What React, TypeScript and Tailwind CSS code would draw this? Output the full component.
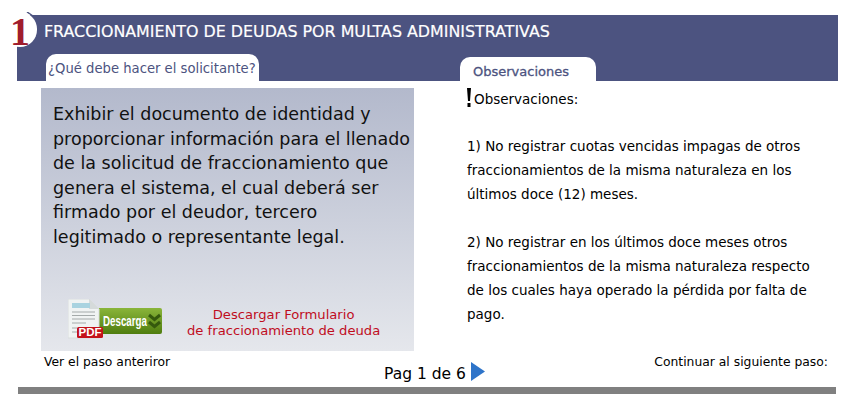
const SANS = { fontFamily: '"DejaVu Sans", sans-serif' };
const ARIAL = { fontFamily: '"Liberation Sans", sans-serif' };

function DownloadBadge() {
  return (
    <div className="relative h-[40px] w-[94px] shrink-0">
      <svg width="94" height="40" viewBox="0 0 94 40" className="absolute inset-0">
        <defs>
          <linearGradient id="green" x1="0" y1="0" x2="0" y2="1">
            <stop offset="0" stopColor="#8ab53a" />
            <stop offset="1" stopColor="#4f7d0f" />
          </linearGradient>
        </defs>
        <path d="M31 9h61a2 2 0 0 1 2 2v22a2 2 0 0 1-2 2H31z" fill="url(#green)" />
        <path d="M81 16l5.500 4.500 5.500-4.500M81 23l5.500 4.500 5.500-4.500" fill="none" stroke="#35590d" strokeWidth="3" />
        <path d="M0 0h21l10 10v29H0z" fill="#f0f3f3" stroke="#d9dddd" />
        <path d="M21 0v10h10z" fill="#d5dada" />
        <rect x="4" y="4" width="18" height="5" fill="#a9d3e0" />
        <path d="M4 13h23M4 16.500h23M4 20h23M4 24h14M4 29h5M4 33h5" stroke="#a4aaaa" strokeWidth="1" />
        <rect x="9" y="28" width="26" height="11" rx="1.500" fill="#c4121a" />
      </svg>
      <span className="absolute left-[9px] top-[28px] w-[26px] text-center text-[11.500px] leading-[11px] font-bold text-white" style={ARIAL}>PDF</span>
      <span className="absolute left-[35px] top-[13px] text-[15px] leading-[18px] font-bold text-white scale-x-[0.65] origin-left" style={ARIAL}>Descarga</span>
    </div>
  );
}

export default function App() {
  return (
    <div className="w-[848px] h-[402px] bg-white overflow-hidden flex flex-col pt-[15px] pl-[17px] pr-[10px] text-black" style={SANS}>
      {/* Header */}
      <div className="relative h-[66px] bg-[#4c5380] flex flex-col shrink-0">
        <svg width="10" height="6" viewBox="0 0 10 6" className="absolute left-[9px] top-[-3px]">
          <path d="M1 0l6 4" stroke="#4c5380" strokeWidth="1.500" fill="none" />
        </svg>
        <div className="absolute left-[-14px] top-[-3px] w-[34px] h-[35px] rounded-full bg-white" />
        <span className="absolute left-[-7px] top-[-3px] text-[40px] leading-[40px] font-bold text-[#a01c2c]" style={{ fontFamily: '"Liberation Serif", serif' }}>1</span>
        <div className="h-[33px] pl-[27px] flex items-center text-[15.860px] text-white [-webkit-text-stroke:0.2px_#ffffff]">FRACCIONAMIENTO DE DEUDAS POR MULTAS ADMINISTRATIVAS</div>
        <div className="mt-auto flex items-end pl-[29px]">
          <div className="w-[213px] h-[27px] bg-white rounded-t-[10px] pl-[2px] pt-[5px] text-[13.200px] leading-[20px] text-[#4c5380]">¿Qué debe hacer el solicitante?</div>
          <div className="ml-[201px] w-[136px] h-[24px] bg-white rounded-t-[10px] pl-[13px] pt-[5px] text-[13px] leading-[20px] [-webkit-text-stroke:0.3px_#4c5380] text-[#4c5380]">Observaciones</div>
        </div>
      </div>

      {/* Content */}
      <div className="flex pt-[7px] h-[270px] shrink-0">
        <div className="ml-[24px] w-[373px] h-[263px] flex flex-col bg-gradient-to-b from-[#b3b9cc] to-[#e5e7ec] pl-[12px] pt-[14px]">
          <p className="text-[17.500px] leading-[24.500px] text-[#111111]">
            Exhibir el documento de identidad y<br />
            proporcionar información para el llenado<br />
            de la solicitud de fraccionamiento que<br />
            genera el sistema, el cual deberá ser<br />
            firmado por el deudor, tercero<br />
            legitimado o representante legal.
          </p>
          <div className="mt-auto mb-[12px] ml-[15px] flex items-center">
            <DownloadBadge />
            <div className="ml-[25px] mt-[8px] text-[13.150px] leading-[16px] text-[#c00d1e] text-center">
              Descargar Formulario<br />de fraccionamiento de deuda
            </div>
          </div>
        </div>
        <div className="ml-[53px] w-[360px] text-[13.500px] leading-[24px]">
          <div className="flex items-start h-[22px]">
            <svg width="4" height="19" viewBox="0 0 4 19" className="mr-[3px] shrink-0">
              <path d="M0 0h4L3 13H1zM.5 15h3v4h-3z" fill="#000000" />
            </svg>
            <span className="leading-[22px]">Observaciones:</span>
          </div>
          <p className="mt-[24px]">1) No registrar cuotas vencidas impagas de otros<br />fraccionamientos de la misma naturaleza en los<br />últimos doce (12) meses.</p>
          <p className="mt-[24px]">2) No registrar en los últimos doce meses otros<br />fraccionamientos de la misma naturaleza respecto<br />de los cuales haya operado la pérdida por falta de<br />pago.</p>
        </div>
      </div>

      {/* Footer nav */}
      <div className="relative h-[36px] shrink-0 flex justify-between text-[12.350px] pl-[27px] pr-[10px]">
        <span className="leading-[22px]">Ver el paso anteriror</span>
        <span className="leading-[22px]">Continuar al siguiente paso:</span>
        <div className="absolute left-[367px] top-[12px] flex items-start gap-[5px] text-[15.500px] leading-[22px]">
          <span>Pag 1 de 6</span>
          <svg width="14" height="19" viewBox="0 0 14 19" className="mt-[-1px]"><path d="M0 0l14 9.500L0 19z" fill="#2e74c9" /></svg>
        </div>
      </div>
      <div className="h-[7px] ml-[1px] mr-[2px] bg-[#808080] shrink-0" />
    </div>
  );
}
